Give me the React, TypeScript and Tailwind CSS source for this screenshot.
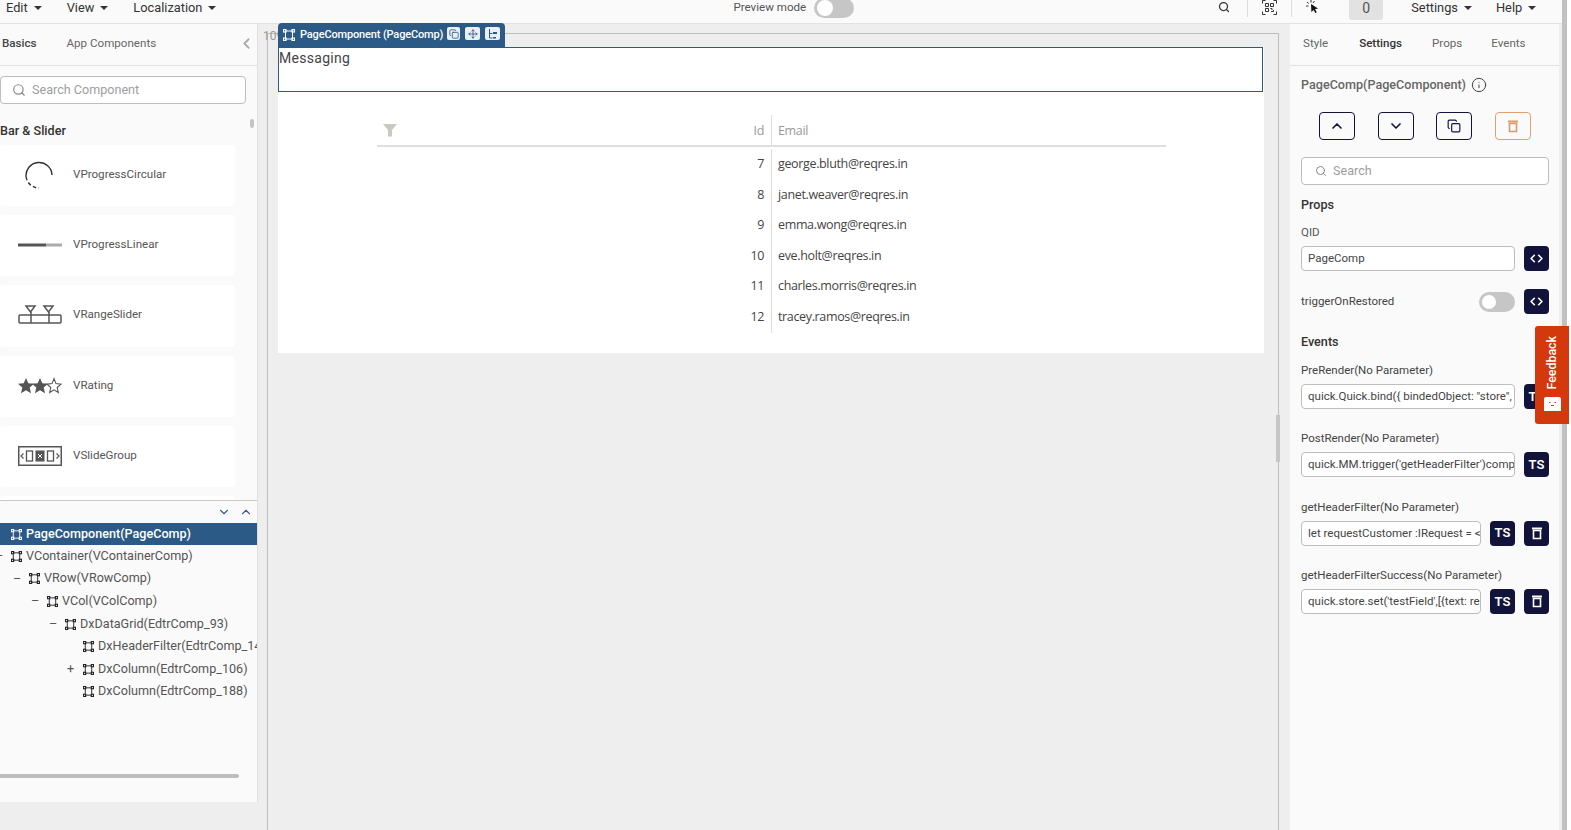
import { Search, ChevronUp, ChevronDown, ChevronLeft, Copy, Info, Move, Code } from 'lucide-react'

const NodeIcon = ({ color = '#222', size = 12 }: { color?: string; size?: number }) => (
  <svg width={size} height={size} viewBox="0 0 12 12" fill="none" stroke={color} strokeWidth="1">
    <path d="M2 2h8M2 10h8M2.5 2.5v7M9.5 2.5v7" />
    <rect x="0.5" y="0.5" width="2.5" height="2.5" fill="none" strokeWidth="1.2" />
    <rect x="9" y="0.5" width="2.5" height="2.5" fill="none" strokeWidth="1.2" />
    <rect x="0.5" y="9" width="2.5" height="2.5" fill="none" strokeWidth="1.2" />
    <rect x="9" y="9" width="2.5" height="2.5" fill="none" strokeWidth="1.2" />
  </svg>
)

const Caret = ({ className = '' }: { className?: string }) => (
  <span className={`inline-block w-0 h-0 border-l-[4px] border-r-[4px] border-t-[4px] border-l-transparent border-r-transparent border-t-[#333] ${className}`} />
)

const TrashIcon = ({ color = '#fff', size = 14 }: { color?: string; size?: number }) => (
  <svg width={size} height={size} viewBox="0 0 14 14" fill="none">
    <path d="M2 1.5h10V3.5H2z" fill={color} />
    <path d="M3.5 4.5h7V12.5h-7z" stroke={color} strokeWidth="1.6" />
  </svg>
)

const CircularIcon = () => (
  <svg width="28" height="28" viewBox="0 0 28 28" fill="none" stroke="#333" strokeWidth="1.4">
    <path d="M27 14A13 13 0 1 0 1.100 16" />
    <path d="M1.100 16A13 13 0 0 0 14 27" strokeDasharray="3.500 2.500" />
  </svg>
)

const LinearIcon = () => (
  <svg width="44" height="6" viewBox="0 0 44 6">
    <rect x="0" y="1.5" width="28" height="3" fill="#555" />
    <rect x="28" y="1.5" width="16" height="3" fill="#aaa" />
  </svg>
)

const RangeIcon = () => (
  <svg width="44" height="20" viewBox="0 0 44 20" fill="none" stroke="#555" strokeWidth="1.5">
    <rect x="1" y="10" width="42" height="8" rx="1" />
    <path d="M13 10v8M31 10v8" />
    <path d="M8 1h9l-4.500 6zM26 1h9l-4.500 6z" />
    <path d="M13 7v3M31 7v3" />
  </svg>
)

const RatingIcon = () => (
  <svg width="44" height="18" viewBox="0 0 44 18">
    <path d="M8 1l2.300 5.200 5.700.6-4.300 3.800 1.300 5.600L8 13.300l-5 2.900 1.300-5.600L0 6.800l5.700-.6z" fill="#555" />
    <path d="M22 1l2.300 5.200 5.700.6-4.300 3.800 1.300 5.600-5-2.900-5 2.900 1.300-5.600L14 6.800l5.700-.6z" fill="#555" />
    <path d="M36 1.800l2 4.800 5 .5-3.800 3.400 1.100 5-4.300-2.600-4.300 2.600 1.100-5L29 7.100l5-.5z" fill="none" stroke="#555" strokeWidth="1.100" />
  </svg>
)

const SlideIcon = () => (
  <svg width="44" height="20" viewBox="0 0 44 20" fill="none" stroke="#555">
    <rect x="0.750" y="0.750" width="42.500" height="18.500" strokeWidth="1.500" />
    <rect x="8.500" y="5" width="6" height="10" strokeWidth="1.300" />
    <rect x="18" y="5" width="8" height="10" fill="#555" />
    <path d="M20 8l4 4M24 8l-4 4" stroke="#fff" strokeWidth="1" />
    <rect x="29.500" y="5" width="6" height="10" strokeWidth="1.300" />
    <path d="M5.500 7.500L3 10l2.500 2.500M38.500 7.500L41 10l-2.500 2.500" strokeWidth="1.200" />
  </svg>
)

const QrIcon = () => (
  <svg width="15" height="15" viewBox="0 0 15 15" fill="none" stroke="#333" strokeWidth="1">
    <path d="M.5 3.500V.5h3M11.500.5h3v3M14.500 11.500v3h-3M3.500 14.500h-3v-3" />
    <path d="M3.500 3.500h3v3h-3zM8.500 3.500h3v3h-3zM3.500 8.500h3v3h-3zM8.500 8.500h1.500v1.500M11.500 10v1.500H9" />
  </svg>
)

const CursorIcon = () => (
  <svg width="14" height="14" viewBox="0 0 14 14" fill="none">
    <path d="M5 4l7 4.500-3 .8 1.800 3-1.400.8-1.800-3-2.200 2z" fill="#111" />
    <path d="M5 0v2.500M1 2l1.800 1.500M0 6h2.500M8.500 1L7 3" stroke="#333" strokeWidth="1" />
  </svg>
)

const components = [
  { name: 'VProgressCircular', icon: <CircularIcon />, h: 'h-[61px]', pl: 'pl-[25px]' },
  { name: 'VProgressLinear', icon: <LinearIcon />, h: 'h-[61px]', pl: 'pl-[18px]' },
  { name: 'VRangeSlider', icon: <RangeIcon />, h: 'h-[62px]', pl: 'pl-[18px]' },
  { name: 'VRating', icon: <RatingIcon />, h: 'h-[61px]', pl: 'pl-[18px]' },
  { name: 'VSlideGroup', icon: <SlideIcon />, h: 'h-[61px]', pl: 'pl-[18px]' },
]

const tree = [
  { label: 'VContainer(VContainerComp)', indent: 10, mark: '–' },
  { label: 'VRow(VRowComp)', indent: 28, mark: '–' },
  { label: 'VCol(VColComp)', indent: 46, mark: '–' },
  { label: 'DxDataGrid(EdtrComp_93)', indent: 64, mark: '–' },
  { label: 'DxHeaderFilter(EdtrComp_142)', indent: 82, mark: '' },
  { label: 'DxColumn(EdtrComp_106)', indent: 82, mark: '+' },
  { label: 'DxColumn(EdtrComp_188)', indent: 82, mark: '' },
]

const rows = [
  { id: 7, email: 'george.bluth@reqres.in' },
  { id: 8, email: 'janet.weaver@reqres.in' },
  { id: 9, email: 'emma.wong@reqres.in' },
  { id: 10, email: 'eve.holt@reqres.in' },
  { id: 11, email: 'charles.morris@reqres.in' },
  { id: 12, email: 'tracey.ramos@reqres.in' },
]

const events = [
  { label: 'PreRender(No Parameter)', value: 'quick.Quick.bind({ bindedObject: "store", bindedField: "x" })', del: false },
  { label: 'PostRender(No Parameter)', value: "quick.MM.trigger('getHeaderFilter')component", del: false },
  { label: 'getHeaderFilter(No Parameter)', value: 'let requestCustomer :IRequest = <IRequest>', del: true },
  { label: 'getHeaderFilterSuccess(No Parameter)', value: "quick.store.set('testField',[{text: response}])", del: true },
]

const DarkButton = ({ children }: { children: React.ReactNode }) => (
  <button className="w-[25px] h-[25px] rounded-[4px] bg-[#12133a] text-white flex items-center justify-center text-[13px] font-semibold shrink-0">
    {children}
  </button>
)

const Toggle = () => (
  <div className="w-[36px] h-[20px] rounded-full bg-[#c6c6c6] flex items-center pl-[2px] shrink-0">
    <div className="w-[14px] h-[14px] rounded-full bg-white ml-[1px]" />
  </div>
)

const outlineBtn = 'w-[36px] h-[28px] rounded-[4px] border border-[#12133a] flex items-center justify-center text-[#12133a] bg-[#fafafa]'

export default function App() {
  return (
    <div className="relative w-[1571px] h-[830px] overflow-hidden flex bg-white font-['Roboto',sans-serif] text-[12.600px] text-[#555]">
      <div className="w-[1562px] h-full flex flex-col bg-[#eeeeee]">
        {/* Top bar */}
        <div className="h-[24px] shrink-0 bg-[#fafafa] border-b border-[#e2e2e2] flex items-start text-[#333] text-[12.800px] leading-[15px]">
          <span className="ml-[6px] flex items-center gap-[6px]">Edit <Caret /></span>
          <span className="ml-[25px] flex items-center gap-[6px]">View <Caret /></span>
          <span className="ml-[25px] flex items-center gap-[6px]">Localization <Caret /></span>
          <span className="ml-[517px] text-[#555] text-[11.600px]">Preview mode</span>
          <div className="ml-[8px] -mt-[2px]"><div className="w-[40px] h-[20px] rounded-full bg-[#c6c6c6] flex items-center pl-[3px]"><div className="w-[16px] h-[16px] rounded-full bg-white" /></div></div>
          <Search size={12} strokeWidth={2.500} className="ml-[364px] mt-[1px]" />
          <div className="ml-[17px] w-px h-[17px] bg-[#ddd]" />
          <div className="ml-[14px]"><QrIcon /></div>
          <div className="ml-[14px] w-px h-[17px] bg-[#ddd]" />
          <div className="ml-[14px]"><CursorIcon /></div>
          <div className="ml-[29px] w-[34px] h-[20px] bg-[#e2e2e2] rounded-b-[3px] text-center leading-[17px] text-[14px] text-[#555]">0</div>
          <span className="ml-[28px] flex items-center gap-[6px]">Settings <Caret /></span>
          <span className="ml-[24px] flex items-center gap-[6px]">Help <Caret /></span>
        </div>

        <div className="flex flex-1 min-h-0">
          {/* Left panel */}
          <aside className="w-[258px] h-[778px] shrink-0 bg-[#fafafa] border-r border-[#e0e0e0] flex flex-col">
            <div className="h-[42px] shrink-0 border-b border-[#e0e0e0] flex items-center pl-[2px] pr-[2px] pb-[2px] text-[11.600px]">
              <span className="font-medium text-[#444]">Basics</span>
              <span className="ml-[30px] text-[#666]">App Components</span>
              <ChevronLeft size={17} strokeWidth={2.500} className="ml-auto text-[#aaa]" />
            </div>
            <div className="relative flex-1 min-h-0 overflow-hidden pt-[10px]">
              <div className="w-[246px] h-[28px] rounded-[4px] border border-[#bdbdbd] bg-white flex items-center pl-[11px] gap-[6px] text-[#9e9e9e]">
                <Search size={14} className="text-[#888]" />
                Search Component
              </div>
              <div className="mt-[19px] font-medium text-[#333] leading-[15px]">Bar &amp; Slider</div>
              <div className="mt-[7px] flex flex-col gap-[9px] w-[235px]">
                {components.map((c) => (
                  <div key={c.name} className={`${c.h} pb-[2px] rounded-[4px] bg-white flex items-center text-[11.600px] text-[#555]`}>
                    <div className={`w-[73px] ${c.pl} flex justify-start`}>{c.icon}</div>
                    {c.name}
                  </div>
                ))}
                <div className="h-[20px] rounded-[4px] bg-white" />
              </div>
              <div className="absolute left-[250px] top-[53px] w-[4px] h-[9px] rounded bg-[#c4c4c4]" />
            </div>
            <div className="h-[302px] shrink-0 border-t border-[#c9c9c9] relative bg-[#fafafa]">
              <div className="h-[22px] flex items-center justify-end pr-[4px] gap-[8px] text-[#3f5f88]">
                <ChevronDown size={14} strokeWidth={2} />
                <ChevronUp size={14} strokeWidth={2} />
              </div>
              <div className="h-[22px] bg-[#2a5a85] text-white flex items-center pl-[11px] gap-[4px] font-medium">
                <NodeIcon color="#fff" size={11} />
                PageComponent(PageComp)
              </div>
              {tree.map((t) => (
                <div key={t.label} className="h-[22.600px] relative flex items-center whitespace-nowrap overflow-hidden" style={{ paddingLeft: t.indent + 1 }}>
                  {t.mark && <span className="absolute text-[#555] leading-none" style={{ left: t.indent - 15 }}>{t.mark}</span>}
                  <span className="mr-[4px]"><NodeIcon size={11} /></span>
                  {t.label}
                </div>
              ))}
              <div className="absolute left-0 top-[273px] w-[239px] h-[4px] rounded-r bg-[#bdbdbd]" />
            </div>
          </aside>

          {/* Canvas */}
          <main className="w-[1032px] shrink-0 pl-[9px] pr-[11px] pt-[9px] flex">
            <div className="relative w-full border-l border-r border-t border-[#bdbdbd] pl-[10px] pr-[14px] pt-[13px]">
              <span className="absolute left-[-5px] top-[-7px] text-[12px] text-[#999]">109</span>
              <div className="relative h-[306px] w-[986px] bg-white">
                <div className="absolute left-0 -top-[24px] h-[24px] w-[227px] rounded-t-[4px] bg-[#2a5a85] text-white flex items-center pl-[5px] text-[11px] tracking-[-0.150px] font-medium whitespace-nowrap">
                  <NodeIcon color="#fff" size={12} />
                  <span className="ml-[5px]">PageComponent (PageComp)</span>
                  <div className="absolute left-[169px] top-[4px] w-[13px] h-[13px] bg-[#eaf0f5] rounded-[2px] flex items-center justify-center"><Copy size={10} className="text-[#2a5a85]" /></div>
                  <div className="absolute left-[187px] top-[4px] w-[15px] h-[13px] bg-[#eaf0f5] rounded-[2px] flex items-center justify-center"><Move size={10} className="text-[#2a5a85]" /></div>
                  <div className="absolute left-[207px] top-[4px] w-[15px] h-[13px] bg-[#eaf0f5] rounded-[2px] flex items-center justify-center">
                    <svg width="10" height="10" viewBox="0 0 10 10" fill="none" stroke="#2a5a85"><path d="M1.500 0v9h3M1.500 4.500h3" /><path d="M5 3h4v2H5zM5 8h3v1.500H5z" fill="#2a5a85" stroke="none" /></svg>
                  </div>
                </div>
                <div className="w-[985px] h-[45px] border border-[#2a5a85] text-[14px] text-[#444] tracking-[0.300px] leading-[20px]">Messaging</div>
                <div className="ml-[99px] mt-[23px] w-[789px] font-['Open_Sans',sans-serif] text-[12.500px] tracking-[-0.350px] text-[#444]">
                  <div className="h-[30px] border-b-2 border-[#dedede] flex items-center text-[#999] box-content">
                    <svg width="14" height="14" viewBox="0 0 14 14" className="ml-[6px]"><path d="M0 1h14L9 7v6.500H5V7z" fill="#c9c9c0" /></svg>
                    <span className="ml-auto pt-[2px]">Id</span>
                    <div className="w-[395px] h-full ml-[7px] border-l border-[#dedede] pl-[6px] pt-[2px] flex items-center">Email</div>
                  </div>
                  <div className="pt-[2px]">
                    {rows.map((r) => (
                      <div key={r.id} className="h-[30.600px] flex items-center">
                        <span className="ml-auto">{r.id}</span>
                        <div className="w-[395px] h-full ml-[7px] border-l border-[#dedede] pl-[6px] flex items-center">{r.email}</div>
                      </div>
                    ))}
                  </div>
                </div>
              </div>
              <div className="absolute left-[1008px] top-[381px] w-[4px] h-[47px] bg-[#c6c6c6]" />
            </div>
          </main>

          {/* Right panel */}
          <aside className="w-[269px] shrink-0 bg-[#fafafa] flex flex-col">
            <div className="h-[42px] shrink-0 border-b border-[#e0e0e0] flex items-center pb-[2px] text-[11.600px] text-[#666]">
              <span className="ml-[13px]">Style</span>
              <span className="ml-[31px] font-medium text-[#333]">Settings</span>
              <span className="ml-[30px]">Props</span>
              <span className="ml-[29px]">Events</span>
            </div>
            <div className="pl-[11px] pr-[10px]">
              <div className="mt-[10px] h-[18px] flex items-center gap-[5px] font-medium text-[#666]">
                PageComp(PageComponent)
                <Info size={16} strokeWidth={1.500} className="text-[#444]" />
              </div>
              <div className="mt-[18px] ml-[18px] flex">
                <button className={outlineBtn}><ChevronUp size={16} strokeWidth={2.500} /></button>
                <button className={`${outlineBtn} ml-[23px]`}><ChevronDown size={16} strokeWidth={2.500} /></button>
                <button className={`${outlineBtn} ml-[22px]`}><Copy size={14} /></button>
                <button className={`${outlineBtn} ml-[23px] border-[#e0a070]`}><TrashIcon color="#d99a6c" /></button>
              </div>
              <div className="mt-[17px] h-[28px] rounded-[4px] border border-[#bdbdbd] bg-white flex items-center pl-[13px] gap-[6px] text-[#9e9e9e]">
                <Search size={12} className="text-[#888]" />
                Search
              </div>
              <div className="mt-[12px] leading-[16px] font-medium text-[#333]">Props</div>
              <div className="mt-[11px] leading-[16px] text-[11.500px]">QID</div>
              <div className="mt-[6px] flex gap-[9px]">
                <div className="w-[214px] h-[25px] rounded-[4px] border border-[#bdbdbd] bg-white pl-[6px] flex items-center text-[11.500px] text-[#444]">PageComp</div>
                <DarkButton><Code size={13} strokeWidth={3} /></DarkButton>
              </div>
              <div className="mt-[18px] flex items-center h-[25px] text-[11.500px] text-[#444]">
                triggerOnRestored
                <div className="ml-auto mr-[9px]"><Toggle /></div>
                <DarkButton><Code size={13} strokeWidth={3} /></DarkButton>
              </div>
              <div className="mt-[20px] leading-[16px] font-medium text-[#333]">Events</div>
              {events.map((ev, i) => (
                <div key={ev.label} className={i === 0 ? 'mt-[12px]' : 'mt-[21.300px]'}>
                  <div className="leading-[16px] text-[11.500px] text-[#444]">{ev.label}</div>
                  <div className="mt-[6px] flex gap-[9px]">
                    <div className={`${ev.del ? 'w-[180px]' : 'w-[214px]'} h-[25px] rounded-[4px] border border-[#bdbdbd] bg-white px-[6px] overflow-hidden whitespace-nowrap leading-[23px] text-[11.500px] text-[#444]`}>{ev.value}</div>
                    <DarkButton>TS</DarkButton>
                    {ev.del && <DarkButton><TrashIcon /></DarkButton>}
                  </div>
                </div>
              ))}
            </div>
          </aside>
        </div>
      </div>

      <div className="w-[5px] h-full bg-[#c1c1c1] shrink-0" />

      {/* Feedback tab */}
      <div className="absolute left-[1535px] top-[326px] w-[34px] h-[98px] rounded-l-[3px] bg-[#d4380d] text-white flex flex-col items-center pt-[10px]">
        <span className="[writing-mode:vertical-rl] rotate-180 text-[12.400px] font-medium leading-[16px]">Feedback</span>
        <div className="mt-[7px] w-[17px] h-[14px] bg-white rounded-t-[2px] flex justify-center items-center">
          <svg width="11" height="9" viewBox="0 0 11 9" fill="none" stroke="#d4380d" strokeWidth="1.200"><path d="M2 3.500h1.500M7.500 3.500h1.500M4 6.500h3" /></svg>
        </div>
      </div>
    </div>
  )
}
